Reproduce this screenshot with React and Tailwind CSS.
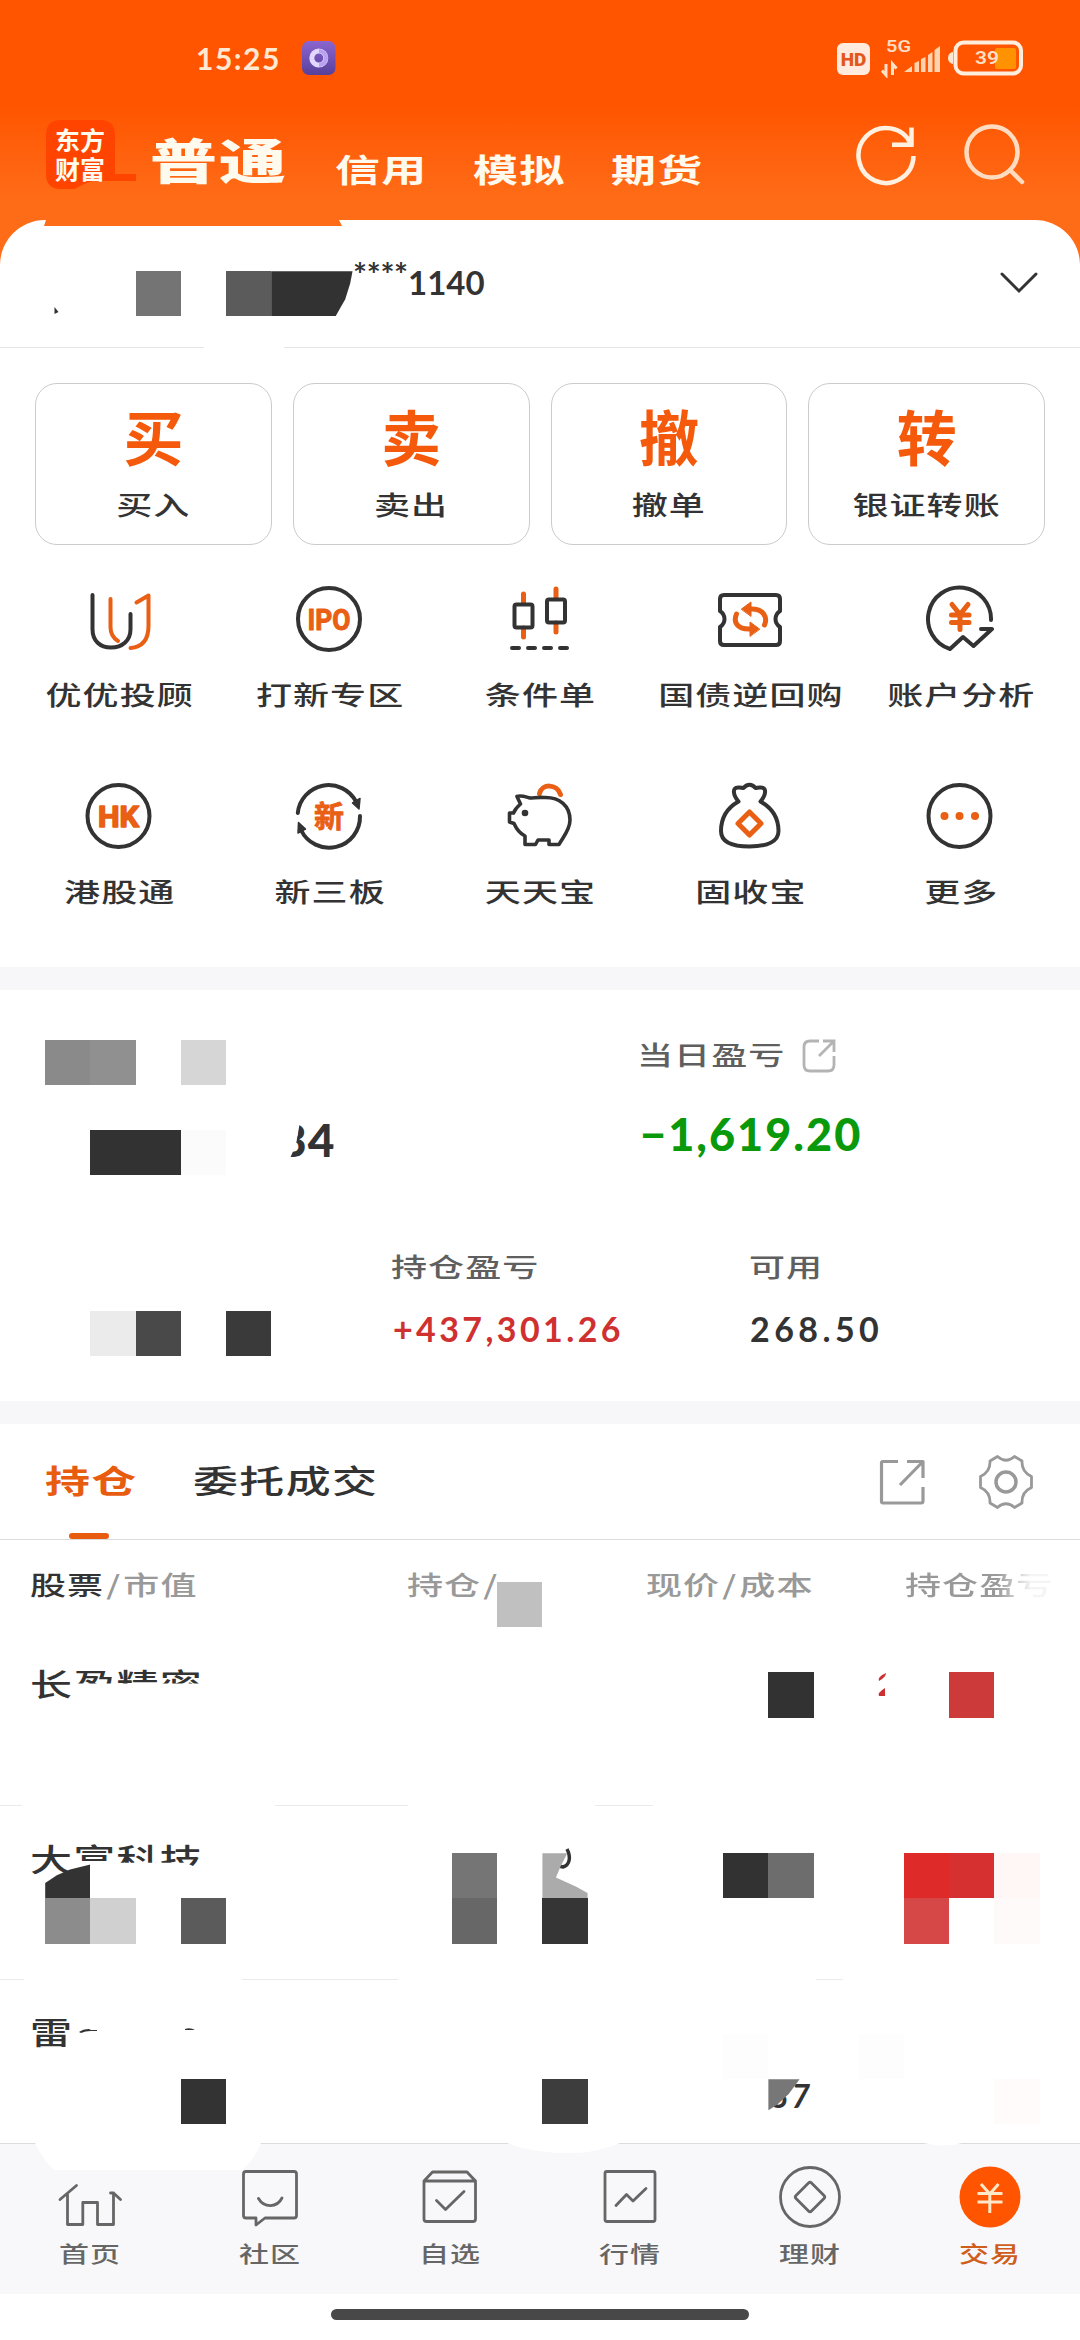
import React from 'react'

const CELL = 45.2

// masked blocks, col / row on a 45.2px grid
const masks = [
  { c: 3, r: 6, color: '#747474' },
  { c: 5, r: 6, color: '#5b5b5b' },
  { c: 6, r: 6, w: 1.8, color: '#323232', clip: 'polygon(0 0, 100% 0, 97% 28%, 91% 62%, 79% 100%, 0 100%)' },
  { c: 1, r: 23, color: '#8a8a8a' },
  { c: 2, r: 23, color: '#909090' },
  { c: 4, r: 23, color: '#d6d6d6' },
  { c: 2, r: 25, w: 2, color: '#323232' },
  { c: 4, r: 25, color: '#fbfbfb' },
  { c: 2, r: 29, color: '#ebebeb' },
  { c: 3, r: 29, color: '#494949' },
  { c: 5, r: 29, color: '#3a3a3a' },
  { c: 11, r: 35, color: '#c0c0c0' },
  { c: 17, r: 37, color: '#323232' },
  { c: 21, r: 37, color: '#cd3a3a' },
  { c: 1, r: 41, color: '#333333', clip: 'polygon(0 66%, 26% 49%, 55% 36%, 100% 25%, 100% 100%, 0 100%)' },
  { c: 10, r: 41, color: '#757575' },
  { c: 12, r: 41, color: '#ababab', clip: 'polygon(0 0, 55% 0, 40% 30%, 30% 54%, 75% 74%, 100% 88%, 100% 100%, 0 100%)' },
  { c: 16, r: 41, color: '#323232' },
  { c: 17, r: 41, color: '#6d6d6d' },
  { c: 20, r: 41, color: '#df2a2a' },
  { c: 21, r: 41, color: '#d63030' },
  { c: 22, r: 41, color: '#fff6f6' },
  { c: 1, r: 42, color: '#8c8c8c' },
  { c: 2, r: 42, color: '#d0d0d0' },
  { c: 4, r: 42, color: '#5b5b5b' },
  { c: 10, r: 42, color: '#676767' },
  { c: 12, r: 42, color: '#353535' },
  { c: 20, r: 42, color: '#d64848' },
  { c: 22, r: 42, color: '#fffafa' },
  { c: 16, r: 45, color: '#fdfdfd' },
  { c: 19, r: 45, color: '#fdfdfd' },
  { c: 4, r: 46, color: '#333333' },
  { c: 12, r: 46, color: '#3d3d3d' },
  { c: 17, r: 46, color: '#777777', clip: 'polygon(0 0, 69% 0, 45% 33%, 20% 56%, 0 69%)' },
  { c: 22, r: 46, color: '#fffbfb' },
]

// Flat, wide lettering
const T = ({ children, className = '' }) => (
  <span className={`inline-block whitespace-nowrap leading-none tracking-[0.03em] -translate-y-[0.06em] scale-y-[0.72] ${className}`}>{children}</span>
)

const Icon = ({ children, className = 'w-[72px] h-[72px]', stroke = '#333', width = 4 }) => (
  <svg viewBox="0 0 72 72" className={className} fill="none" stroke={stroke} strokeWidth={width} strokeLinecap="round" strokeLinejoin="round">
    {children}
  </svg>
)

const OR = '#e95f14'

const cards = [
  { big: '买', label: '买入' },
  { big: '卖', label: '卖出' },
  { big: '撤', label: '撤单' },
  { big: '转', label: '银证转账' },
]

const tools = [
  {
    label: '优优投顾',
    icon: <Icon>
      <path d="M9.5 12V46C9.5 58 17 64.5 28 64.5S47.5 58 47.5 46V31" />
      <path stroke={OR} d="M27.5 16V44C27.5 51 30 55 35 58M53.5 19.5L65.5 12.5V43C65.5 57 59 64 47.5 65" />
    </Icon>,
  },
  {
    label: '打新专区',
    icon: <Icon>
      <circle cx="35" cy="36" r="31" />
      <text x="13.5" y="46.5" fill={OR} stroke={OR} strokeWidth="1" fontSize="29" fontWeight="700" textLength="43" lengthAdjust="spacingAndGlyphs" fontFamily="Roboto, sans-serif">IPO</text>
    </Icon>,
  },
  {
    label: '条件单',
    icon: <Icon>
      <path stroke={OR} strokeWidth="5" d="M19.5 11V20M19.5 45V54M52 6V15M52 40V49" />
      <rect x="10.5" y="21.5" width="18" height="23" rx="2" />
      <rect x="43" y="16.5" width="18" height="23" rx="2" />
      <path d="M8 65H15M24 65H31M40 65H47M56 65H63" />
    </Icon>,
  },
  {
    label: '国债逆回购',
    icon: <Icon>
      <path d="M6 16q0-4 4-4H62q4 0 4 4V28c-6 4-6 12 0 16V58q0 4-4 4H10q-4 0-4-4V44c6-4 6-12 0-16Z" />
      <path stroke={OR} strokeWidth="5" d="M34 26H38C49 26 54 34 50.5 42M39 46H35C23 46 19 39 22.5 31" />
      <path fill={OR} stroke={OR} strokeWidth="1" d="M27.5 26L37 19V33ZM45.5 46L36 39V53Z" />
    </Icon>,
  },
  {
    label: '账户分析',
    icon: <Icon>
      <path d="M66 37A31.5 31.5 0 1 0 25 66L38 54L48.5 63L67 46H56" />
      <path stroke={OR} strokeWidth="5" d="M27 21.5L35 31.5L43 21.5M35 31.5V46.5M26.5 32H44M26.5 39.5H44" />
    </Icon>,
  },
  {
    label: '港股通',
    icon: <Icon>
      <circle cx="35.5" cy="36" r="31" />
      <text x="15" y="46.5" fill={OR} stroke={OR} strokeWidth="1.5" fontSize="29" fontWeight="700" textLength="41" lengthAdjust="spacingAndGlyphs" fontFamily="Roboto, sans-serif">HK</text>
    </Icon>,
  },
  {
    label: '新三板',
    icon: <Icon>
      <path d="M3.8 33A31 31 0 0 1 62 21.5M66 36A31 31 0 0 1 7 50" />
      <path fill="#333" strokeWidth="1.5" d="M58.5 23L66 18.5L65 29ZM4 53L4.5 42.5L11.5 49Z" />
      <text x="20" y="46.5" fill={OR} stroke={OR} strokeWidth="0.8" fontSize="30" fontWeight="700" fontFamily="'Noto Sans CJK SC', sans-serif">新</text>
    </Icon>,
  },
  {
    label: '天天宝',
    icon: <Icon>
      <path stroke={OR} strokeWidth="5" d="M35.5 13.5C38 3.5 53 3.5 56.5 14.5" />
      <path strokeWidth="3.6" d="M16.5 24L13 16.5C17 15 22 17 26 18C30 18 34 17 40 17.5C56 17 66 26 66 40C66 50 59 57 55 64.5H45V60H34L31.5 64.5H21V56C15 53 12 48 10 43.5L5.5 42V33H9.5C11 29 13 27 16.5 24Z" />
      <circle cx="21" cy="33" r="3.3" fill="#333" stroke="none" />
    </Icon>,
  },
  {
    label: '固收宝',
    icon: <Icon>
      <path d="M24.5 21.5C19 15 18 7.5 24 7.5C26 7 28 8 29.5 8C33 3.5 38 3.5 41.5 8C43 8 45 7 47 7.5C53 7.5 52 15 46.5 21.5C58 28 64.5 37 64.5 51C64.5 61 54 66.5 35.5 66.5S7 61 7 51C7 37 13 28 24.5 21.5Z" />
      <path stroke={OR} strokeWidth="5" d="M35.5 32L47 43.5L35.5 55L24 43.5Z" />
    </Icon>,
  },
  {
    label: '更多',
    icon: <Icon>
      <circle cx="34.5" cy="36" r="31" />
      <g fill={OR} stroke="none">
        <circle cx="19.5" cy="36" r="4" /><circle cx="34.5" cy="36" r="4" /><circle cx="50" cy="36" r="4" />
      </g>
    </Icon>,
  },
]

const navItems = [
  { label: '首页', d: 'M6 38.5L22.5 24.5M13.5 33V63.5H28.8V41.5H43.5V63.5H59.5V32M56.5 32H59.5L66.5 38.5' },
  { label: '社区', d: 'M12 10.5H60Q62.5 10.5 62.5 13V54.5Q62.5 57 60 57H31L22 64V57H12Q9.5 57 9.5 54.5V13Q9.5 10.5 12 10.5ZM24.5 37.5C30 47 43 47 48 37' },
  { label: '自选', d: 'M10 20L18.5 11H53L61.5 20V58Q61.5 60.5 59 60.5H12.5Q10 60.5 10 58ZM10 20H61.5M22.5 39.5L31.5 48.5L50 30.5' },
  { label: '行情', d: 'M13 10.5H59Q61 10.5 61 12.5V58.5Q61 60.5 59 60.5H13Q11 60.5 11 58.5V12.5Q11 10.5 13 10.5ZM22 44.5L32.5 33.5L39 40L52 27.5' },
  { label: '理财', d: 'M36 6.5A29.5 29.5 0 1 1 36 65.5A29.5 29.5 0 1 1 36 6.5ZM34.5 22Q36 20.5 37.5 22L50 34.5Q51.5 36 50 37.5L37.5 50Q36 51.5 34.5 50L22 37.5Q20.5 36 22 34.5Z' },
]

// what is left of each row divider: [margin-left, width]
const Divider = ({ parts }) => (
  <div className="flex h-px">
    {parts.map(([ml, w], i) => <div key={i} className="h-px shrink-0 bg-[#ebebeb]" style={{ marginLeft: ml, width: w }} />)}
  </div>
)

function StatusBar() {
  return (
    <div className="flex h-[116px] items-center pl-[196px] pr-[56px]">
      <span className="w-[106px] font-[Lato] text-[30px] font-bold leading-none tracking-[0.05em] text-[#ffe9d2]">15:25</span>
      <svg viewBox="0 0 34 34" className="h-[34px] w-[34px]">
        <defs>
          <linearGradient id="app" x1="0" y1="0" x2="0" y2="1"><stop stopColor="#8c65cf" /><stop offset="1" stopColor="#58409a" /></linearGradient>
        </defs>
        <rect width="33.5" height="34" rx="7" fill="url(#app)" />
        <circle cx="16.8" cy="17" r="7" fill="none" stroke="#e2d8ff" strokeWidth="5" />
        <path d="M17 10A7 7 0 0 1 17 24" fill="none" stroke="#b9a3f0" strokeWidth="4" />
      </svg>
      <div className="ml-auto flex items-center">
        <div className="mt-[2px] flex h-[32px] w-[33px] items-center justify-center rounded-[6px] bg-[#ffeadd] font-[Roboto] text-[19px] font-black leading-none text-[#e4571c]">HD</div>
        <svg viewBox="0 0 60 40" className="ml-[11px] h-[40px] w-[60px]">
          <text x="5" y="14" fontSize="16" textLength="25" lengthAdjust="spacingAndGlyphs" fontWeight="600" fontFamily="Roboto, sans-serif" fill="#ffdcc0">5G</text>
          <path d="M5 26V37L1 32.5M11.5 37V26L15.5 30.5" fill="none" stroke="#ffe0c8" strokeWidth="3" />
          <path d="M23 34L31 28V34ZM33.5 25L38 23V34H33.5ZM40 21L44.5 19V34H40ZM47 17L51.5 14V34H47ZM53.5 12L59 8V34H53.5Z" fill="#ffd3b0" />
        </svg>
        <svg viewBox="0 0 76 36" className="ml-[7px] h-[36px] w-[76px]">
          <path d="M5 12Q0 13 0 18T5 24Z" fill="#ffe6d0" />
          <rect x="7.5" y="2.5" width="65.5" height="31" rx="8" fill="none" stroke="#ffeedd" strokeWidth="4" />
          <rect x="47" y="8" width="21" height="21" rx="2" fill="#ff9200" />
          <text x="27" y="24" fontSize="19" textLength="24" lengthAdjust="spacingAndGlyphs" fontWeight="600" fontFamily="Roboto, sans-serif" fill="#ffe0c0">39</text>
        </svg>
      </div>
    </div>
  )
}

function Header() {
  return (
    <header className="h-[265px] bg-linear-to-b from-[#ff5500] from-[40%] to-[#ff6c17] to-[76%]">
      <StatusBar />
      <div className="flex h-[104px] items-start pl-[46px] pr-[54px] text-[#fffaee]">
        <div className="relative mt-1 h-[70px] w-[90px]">
          <svg viewBox="0 0 90 70" className="absolute inset-0 h-full w-full">
            <path d="M15 0H54Q69 0 69 15V54H90V61H47Q38 63 29 69H15Q0 69 0 54V15Q0 0 15 0Z" fill="#ff4400" />
          </svg>
          <div className="relative ml-[9px] w-[52px] break-all pt-[5px] text-[25px] font-bold leading-[29px]">东方财富</div>
        </div>
        <T className="ml-[14px] mt-[13px] h-[64px] w-[142px] text-[67px] font-black">普通</T>
        <T className="ml-[43px] mt-[32px] w-[138px] text-[45px] font-bold">信用</T>
        <T className="mt-[32px] w-[138px] text-[45px] font-bold">模拟</T>
        <T className="mt-[32px] text-[45px] font-bold">期货</T>
        <svg viewBox="0 0 64 64" className="ml-auto mt-[7px] h-[64px] w-[64px]" fill="none" stroke="#fff0df" strokeWidth="4.5">
          <path d="M59.5 33A27.5 27.5 0 1 1 57 21M38 21.8H57.5V4.5" />
        </svg>
        <svg viewBox="0 0 64 64" className="ml-[44px] mt-[7px] h-[64px] w-[64px]" fill="none" stroke="#ffdcc0" strokeWidth="4.5" strokeLinecap="round">
          <circle cx="30" cy="29" r="25.5" /><path d="M48 47L60 59" />
        </svg>
      </div>
    </header>
  )
}

function Summary() {
  return (
    <section className="flex h-[411px] flex-col">
      <div className="flex h-[240px]">
        <div className="w-[637px] pl-[290px] pt-[127px]">
          <span className="inline-block font-[Lato] text-[46px] font-black leading-none text-[#333]">
            <span className="inline-block -ml-[10px] [clip-path:polygon(78%_0,100%_0,100%_100%,30%_100%,60%_60%)]">3</span>
            <span className="inline-block ml-px">4</span>
          </span>
        </div>
        <div>
          <div className="mt-[48px] flex h-[36px] items-center text-[36px] text-[#5f5f5f]">
            <T className="w-[165px] font-medium">当日盈亏</T>
            <svg viewBox="0 0 34 34" className="h-[34px] w-[34px]" fill="none" stroke="#b4b4b4" strokeWidth="2.8">
              <path d="M17 2H8Q2 2 2 8V26Q2 32 8 32H26Q32 32 32 26V17M21 2H32V13M32 2L17 17" />
            </svg>
          </div>
          <div className="ml-[3px] mt-[38px] font-[Lato] text-[45px] font-black leading-none tracking-[0.045em] text-[#0a990a]">−1,619.20</div>
        </div>
      </div>
      <div className="flex pl-[391px]">
        <div className="w-[358px]">
          <T className="mt-[20px] text-[36px] font-medium text-[#5f5f5f]">持仓盈亏</T>
          <div className="ml-[2px] mt-[23px] font-[Lato] text-[34px] font-bold leading-none tracking-[0.1em] text-[#cf3030]">+437,301.26</div>
        </div>
        <div>
          <T className="mt-[20px] text-[36px] font-medium text-[#5f5f5f]">可用</T>
          <div className="ml-px mt-[23px] font-[Lato] text-[34px] font-bold leading-none tracking-[0.13em] text-[#333]">268.50</div>
        </div>
      </div>
    </section>
  )
}

function Holdings() {
  return (
    <section className="h-[719px] overflow-hidden">
      <div className="flex h-[116px] items-center border-b border-[#dcdcdc] pl-[45px] pr-[47px] text-[45px]">
        <div className="relative flex h-full w-[148px] items-center font-bold text-[#e85c10]">
          <T>持仓</T>
          <div className="absolute bottom-0 left-[24px] h-[6px] w-[40px] rounded-full bg-[#e85c10]" />
        </div>
        <T className="font-medium text-[#333]">委托成交</T>
        <svg viewBox="0 0 46 46" className="ml-auto h-[46px] w-[46px]" fill="none" stroke="#999" strokeWidth="3.2" strokeLinejoin="round">
          <path d="M19 2.5H4Q2.5 2.5 2.5 4V42Q2.5 44 4 44H42Q44 44 44 42V28M28 2.5H44V19M44 2.5L21 26" />
        </svg>
        <svg viewBox="0 0 54 54" className="ml-[54px] h-[54px] w-[54px]" fill="none" stroke="#999" strokeWidth="2.8" strokeLinejoin="round">
          <path d="M18.5 1.5Q27 9 35.5 1.5L43 6Q42.5 17 52.5 21.5V32.5Q42.5 37 43 48L35.5 52.5Q27 45 18.5 52.5L11 48Q11.5 37 1.5 32.5V21.5Q11.5 17 11 6Z" />
          <circle cx="27" cy="27" r="10" strokeWidth="3.5" />
        </svg>
      </div>
      <div className="flex h-[91px] items-center pl-[30px] text-[36px] font-medium text-[#999]">
        <div className="w-[377px]"><T><span className="text-[#333]">股票</span><span className="mx-[2px]">/</span>市值</T></div>
        <div className="w-[239px]"><T>持仓<span className="ml-[2px]">/</span></T></div>
        <div className="w-[259px]"><T>现价<span className="mx-[2px]">/</span>成本</T></div>
        <T className="py-[8px] bg-linear-to-r from-[#999] from-[62%] to-[#f4f4f4] to-[85%] bg-clip-text text-transparent">持仓盈亏</T>
      </div>
      <div className="flex h-[174px] items-start pl-[30px] pt-[34px] text-[42px] font-medium text-[#333]">
        <T>长<span className="inline-block [clip-path:inset(0_0_50%_0)]">盈精密</span></T>
        <svg viewBox="0 0 12 28" className="ml-[674px] mt-[6px] h-[28px] w-[12px] shrink-0" fill="#cc2f2f">
          <path d="M2 10Q0 6 9 2Q9 6 2 10ZM2 25Q0 22 8 17V25Z" />
        </svg>
      </div>
      <Divider parts={[[0, 22], [253, 133], [187, 58]]} />
      <div className="flex h-[173px] items-start pl-[30px] pt-[34px] text-[42px] font-medium text-[#333]">
        <T>大<span className="inline-block [clip-path:inset(0_0_36%_0)]">富科</span><span className="inline-block [clip-path:polygon(0_0,100%_0,100%_90%,60%_64%,0_64%)]">技</span></T>
        <svg viewBox="0 0 20 24" className="ml-[352px] mt-[8px] h-[24px] w-[20px] shrink-0" fill="none" stroke="#333" strokeWidth="3.5">
          <path d="M12 1C16 9 15 17 8 19L3 18" />
        </svg>
      </div>
      <Divider parts={[[0, 24], [218, 156], [418, 27]]} />
      <div className="flex h-[164px] items-start pl-[30px] pt-[33px] text-[42px] font-medium text-[#333]">
        <T>雷</T>
        <svg viewBox="0 0 130 10" className="ml-[4px] mt-[12px] h-[10px] w-[130px] shrink-0" fill="#333">
          <path d="M2 7Q6 4 12 4L16 6Q9 5.500 4 8ZM14 5H20V6H14ZM108 4Q113 2 118 5H108Z" />
        </svg>
        <div className="ml-[563px] mt-[67px] font-[Lato] text-[32px] font-bold italic leading-none tracking-[0.08em]">
          <span className="inline-block [clip-path:polygon(100%_20%,100%_100%,0_100%,30%_70%)]">3</span>7
        </div>
      </div>
    </section>
  )
}

function BottomNav() {
  return (
    <nav className="relative h-[151px] border-t border-[#dcdcdc] bg-[#f8f8fa]">
      <svg viewBox="0 0 1080 30" className="absolute -top-px left-0 h-[30px] w-full" fill="#fff">
        <path d="M35 0Q43 17 54 27H242Q254 17 261 0ZM507 0Q532 10 570 10Q597 10 620 0ZM924 0Q943 5 962 0Z" />
      </svg>
      <div className="relative grid grid-cols-6 pt-[17px] text-[30px] font-medium text-[#666]">
        {navItems.map(n => (
          <div key={n.label} className="flex flex-col items-center">
            <Icon stroke="#666" width={2.8}><path d={n.d} /></Icon>
            <T className="mt-[6px]">{n.label}</T>
          </div>
        ))}
        <div className="flex flex-col items-center text-[#cf5d1c]">
          <Icon stroke="#ffe8c8" width={3}>
            <circle cx="36" cy="36" r="30.5" fill="#ff5500" stroke="none" />
            <path strokeLinecap="butt" d="M27 23L35.8 33L44.5 23M35.8 33V52M23.5 32.5H48.5M23.5 41H48.5" />
          </Icon>
          <T className="mt-[6px]">交易</T>
        </div>
      </div>
    </nav>
  )
}

export default function App() {
  return (
    <div className="relative h-[2340px] w-[1080px] overflow-hidden bg-white font-['Noto_Sans_CJK_SC',sans-serif] text-[#333]">
      <Header />

      <div className="relative -mt-[45px] flex h-[128px] items-start rounded-t-[45px] border-b border-[#e5e5e5] bg-white pl-[353px] pr-[42px]">
        <span className="mt-[38px] w-[55px] font-[Lato] text-[33px] font-bold leading-none tracking-[-0.01em]">****</span>
        <span className="mt-[46px] font-[Lato] text-[33px] font-bold leading-none">1140</span>
        <svg viewBox="0 0 38 22" className="ml-auto mt-[52px] h-[22px] w-[38px]" fill="none" stroke="#333" strokeWidth="3" strokeLinecap="round">
          <path d="M2 2L19 19L36 2" />
        </svg>
        {/* uneven top and bottom edges of the panel */}
        <svg viewBox="0 0 1080 128" className="absolute left-0 top-0 h-[128px] w-[1080px]">
          <path d="M46 0H339L342 6H44Z" fill="#ff6c17" />
          <path d="M54.5 87L58.5 92L54.5 94Z" fill="#333" />
          <path d="M204 126H284V128H204Z" fill="#fff" />
        </svg>
      </div>

      <section className="h-[619px] pt-[35px]">
        <div className="grid grid-cols-4 gap-[21px] px-[35px]">
          {cards.map(c => (
            <div key={c.label} className="flex h-[162px] flex-col items-center rounded-[22px] border border-[#cbcbcb] pt-[21px]">
              <span className="text-[60px] font-bold leading-none text-[#f55a0c]">{c.big}</span>
              <T className="mt-[23px] text-[36px] font-medium">{c.label}</T>
            </div>
          ))}
        </div>
        <div className="mt-[38px] grid grid-cols-5 px-[14px]">
          {tools.map(t => (
            <div key={t.label} className="flex h-[197px] flex-col items-center">
              {t.icon}
              <T className="mt-[23px] ml-px text-[36px] font-medium">{t.label}</T>
            </div>
          ))}
        </div>
      </section>

      <div className="h-[23px] bg-[#f7f7fa]" />
      <Summary />
      <div className="h-[23px] bg-[#f7f7fa]" />
      <Holdings />
      <BottomNav />
      <div className="flex h-[46px] justify-center pt-[15px]">
        <div className="h-[11px] w-[418px] rounded-full bg-[#484848]" />
      </div>

      {masks.map(m => (
        <div
          key={`${m.c}-${m.r}`}
          className="absolute"
          style={{
            left: m.c * CELL,
            top: m.r * CELL,
            width: (m.w || 1) * CELL,
            height: CELL,
            backgroundColor: m.color,
            clipPath: m.clip,
          }}
        />
      ))}
    </div>
  )
}
